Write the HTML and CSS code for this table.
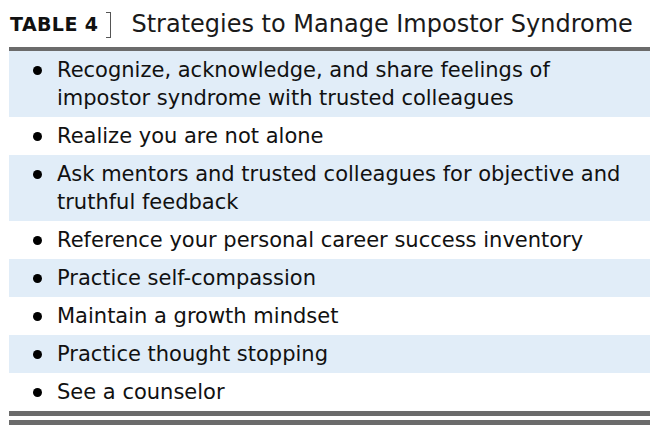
FILE: index.html
```html
<!DOCTYPE html>
<html>
<head>
<meta charset="utf-8">
<link rel="stylesheet" href="styles.css">
</head>
<body>
<div class="page">
  <div class="title">
    <span class="label">TABLE 4</span>
    <span class="bracket"></span>
    <span class="caption">Strategies to Manage Impostor Syndrome</span>
  </div>
  <div class="table">
    <div class="row shade"><span class="dot"></span><span class="text">Recognize, acknowledge, and share feelings of impostor syndrome with trusted colleagues</span></div>
    <div class="row"><span class="dot"></span><span class="text">Realize you are not alone</span></div>
    <div class="row shade"><span class="dot"></span><span class="text">Ask mentors and trusted colleagues for objective and truthful feedback</span></div>
    <div class="row"><span class="dot"></span><span class="text">Reference your personal career success inventory</span></div>
    <div class="row shade"><span class="dot"></span><span class="text">Practice self-compassion</span></div>
    <div class="row"><span class="dot"></span><span class="text">Maintain a growth mindset</span></div>
    <div class="row shade"><span class="dot"></span><span class="text">Practice thought stopping</span></div>
    <div class="row"><span class="dot"></span><span class="text">See a counselor</span></div>
  </div>
</div>
</body>
</html>
```
FILE: styles.css
```css
html, body {
  margin: 0;
  padding: 0;
  background: #ffffff;
}
.page {
  width: 641px;
  margin-left: 9px;
  font-family: "DejaVu Sans", Verdana, sans-serif;
  color: #111111;
}
.title {
  display: flex;
  align-items: center;
  height: 47px;
}
.label {
  font-weight: bold;
  font-size: 19px;
  letter-spacing: 0.4px;
  margin-left: 1px;
  color: #111;
}
.bracket {
  display: inline-block;
  width: 4px;
  height: 24px;
  border: 1px solid #555;
  border-left: none;
  margin-left: 8px;
  margin-right: 20px;
  margin-top: 2px;
}
.caption {
  font-size: 24px;
  color: #1a1a1a;
}
.table {
  border-top: 4px solid #6b6b6b;
  border-bottom: 14px double #6b6b6b;
}
.row {
  display: flex;
  align-items: flex-start;
  padding: 5px 10px 5px 24px;
  font-size: 21px;
  line-height: 28px;
}
.shade {
  background: #e1edf8;
}
.dot {
  flex: none;
  width: 9px;
  height: 9px;
  border-radius: 50%;
  background: #000;
  margin-top: 10px;
  margin-right: 15px;
}
.text {
  flex: 1;
}
```
